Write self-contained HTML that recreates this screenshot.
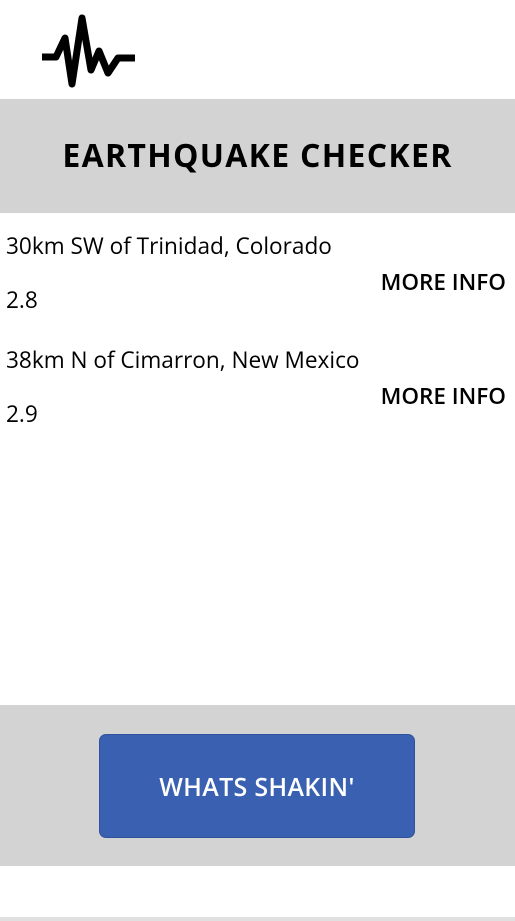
<!DOCTYPE html>
<html><head><meta charset="utf-8"><style>
*{margin:0;padding:0;box-sizing:border-box}
body{width:515px;height:921px;background:#fff;font-family:"Open Sans","Liberation Sans",sans-serif;position:relative;overflow:hidden;color:#000}
.hdr{position:absolute;top:99px;left:0;width:515px;height:114px;background:#d3d3d3;text-align:center;line-height:114px;font-weight:bold;font-size:32px;letter-spacing:1.3px}
.t{position:absolute;left:6px;font-size:22.6px}
.m{position:absolute;right:9px;font-size:22.5px;font-weight:600}
.foot{position:absolute;top:705px;left:0;width:515px;height:161px;background:#d3d3d3}
.btn{position:absolute;left:99px;top:29px;width:316px;height:104px;background:#3960b1;border:1px solid #2f529c;border-radius:7px;color:#fff;font-size:25px;font-weight:600;text-align:center;line-height:104px;letter-spacing:0.3px}
.bl{position:absolute;top:917px;left:0;width:515px;height:4px;background:#e0e0e0}
</style></head><body>
<svg style="position:absolute;left:0;top:0" width="160" height="99"><polyline points="42,57 56,57 65,38 72,84 82,18 91,70 99,51 108,73 118,58 135,58" fill="none" stroke="#000" stroke-width="7" stroke-linejoin="round" stroke-linecap="butt"/></svg>
<div class="hdr">EARTHQUAKE CHECKER</div>
<div class="t" style="top:230px">30km SW of Trinidad, Colorado</div>
<div class="m" style="top:266px">MORE INFO</div>
<div class="t" style="top:284px">2.8</div>
<div class="t" style="top:344px">38km N of Cimarron, New Mexico</div>
<div class="m" style="top:380px">MORE INFO</div>
<div class="t" style="top:398px">2.9</div>
<div class="foot"><div class="btn">WHATS SHAKIN'</div></div>
<div class="bl"></div>
</body></html>
